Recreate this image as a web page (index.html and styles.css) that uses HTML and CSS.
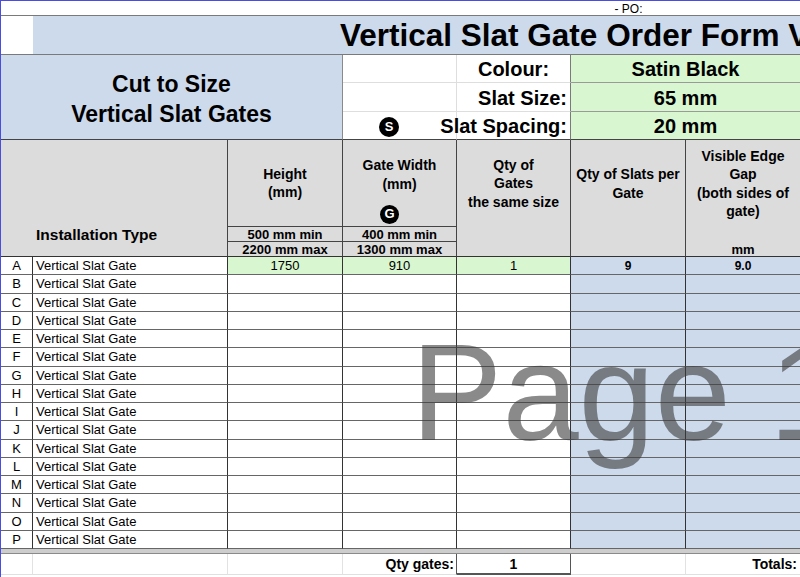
FILE: index.html
```html
<!DOCTYPE html>
<html lang="en">
<head>
<meta charset="utf-8">
<title>Vertical Slat Gate Order Form</title>
<link rel="stylesheet" href="styles.css">
</head>
<body>
<div class="frame">
  <div class="sheet">
    <!-- PO row -->
    <div class="c po-blank"></div>
    <div class="c po">- PO:</div>
    <div class="c po-end"></div>

    <!-- Title row -->
    <div class="c title-gap"></div>
    <div class="c title"><span>Vertical Slat Gate Order Form V2</span></div>

    <!-- Info rows -->
    <div class="c cut"><div>Cut to Size<br>Vertical Slat Gates</div></div>
    <div class="c blank"></div>
    <div class="c label center">Colour:</div>
    <div class="c value">Satin Black</div>
    <div class="c blank"></div>
    <div class="c label">Slat Size:</div>
    <div class="c value">65 mm</div>
    <div class="c blank last s-cell"><span class="badge">S</span></div>
    <div class="c label last">Slat Spacing:</div>
    <div class="c value last">20 mm</div>

    <!-- Header -->
    <div class="c hd inst">Installation Type</div>
    <div class="c hd hmain sep">Height<br>(mm)</div>
    <div class="c hd hmain sep gw"><div>Gate Width<br>(mm)</div><span class="badge badge-g">G</span></div>
    <div class="c hd hmain">Qty of<br>Gates<br>the same size</div>
    <div class="c hd hmain">Qty of Slats per<br>Gate</div>
    <div class="c hd hmain end">Visible Edge<br>Gap<br>(both sides of<br>gate)</div>

    <div class="c hd hsub sep">500 mm min</div>
    <div class="c hd hsub sep">400 mm min</div>
    <div class="c hd hsub"></div>
    <div class="c hd hsub"></div>
    <div class="c hd hsub end"></div>

    <div class="c hd hsub sep bot">2200 mm max</div>
    <div class="c hd hsub sep bot">1300 mm max</div>
    <div class="c hd hsub bot"></div>
    <div class="c hd hsub bot"></div>
    <div class="c hd hsub bot end">mm</div>

    <!-- Data rows -->
    <div class="c d let">A</div><div class="c d typ">Vertical Slat Gate</div><div class="c d num green">1750</div><div class="c d num green">910</div><div class="c d num green">1</div><div class="c d num blue bold">9</div><div class="c d num blue bold end">9.0</div>
    <div class="c d let">B</div><div class="c d typ">Vertical Slat Gate</div><div class="c d"></div><div class="c d"></div><div class="c d"></div><div class="c d blue"></div><div class="c d blue end"></div>
    <div class="c d let">C</div><div class="c d typ">Vertical Slat Gate</div><div class="c d"></div><div class="c d"></div><div class="c d"></div><div class="c d blue"></div><div class="c d blue end"></div>
    <div class="c d let">D</div><div class="c d typ">Vertical Slat Gate</div><div class="c d"></div><div class="c d"></div><div class="c d"></div><div class="c d blue"></div><div class="c d blue end"></div>
    <div class="c d let">E</div><div class="c d typ">Vertical Slat Gate</div><div class="c d"></div><div class="c d"></div><div class="c d"></div><div class="c d blue"></div><div class="c d blue end"></div>
    <div class="c d let">F</div><div class="c d typ">Vertical Slat Gate</div><div class="c d"></div><div class="c d"></div><div class="c d"></div><div class="c d blue"></div><div class="c d blue end"></div>
    <div class="c d let">G</div><div class="c d typ">Vertical Slat Gate</div><div class="c d"></div><div class="c d"></div><div class="c d"></div><div class="c d blue"></div><div class="c d blue end"></div>
    <div class="c d let">H</div><div class="c d typ">Vertical Slat Gate</div><div class="c d"></div><div class="c d"></div><div class="c d"></div><div class="c d blue"></div><div class="c d blue end"></div>
    <div class="c d let">I</div><div class="c d typ">Vertical Slat Gate</div><div class="c d"></div><div class="c d"></div><div class="c d"></div><div class="c d blue"></div><div class="c d blue end"></div>
    <div class="c d let">J</div><div class="c d typ">Vertical Slat Gate</div><div class="c d"></div><div class="c d"></div><div class="c d"></div><div class="c d blue"></div><div class="c d blue end"></div>
    <div class="c d let">K</div><div class="c d typ">Vertical Slat Gate</div><div class="c d"></div><div class="c d"></div><div class="c d"></div><div class="c d blue"></div><div class="c d blue end"></div>
    <div class="c d let">L</div><div class="c d typ">Vertical Slat Gate</div><div class="c d"></div><div class="c d"></div><div class="c d"></div><div class="c d blue"></div><div class="c d blue end"></div>
    <div class="c d let">M</div><div class="c d typ">Vertical Slat Gate</div><div class="c d"></div><div class="c d"></div><div class="c d"></div><div class="c d blue"></div><div class="c d blue end"></div>
    <div class="c d let">N</div><div class="c d typ">Vertical Slat Gate</div><div class="c d"></div><div class="c d"></div><div class="c d"></div><div class="c d blue"></div><div class="c d blue end"></div>
    <div class="c d let">O</div><div class="c d typ">Vertical Slat Gate</div><div class="c d"></div><div class="c d"></div><div class="c d"></div><div class="c d blue"></div><div class="c d blue end"></div>
    <div class="c d let">P</div><div class="c d typ">Vertical Slat Gate</div><div class="c d"></div><div class="c d"></div><div class="c d"></div><div class="c d blue"></div><div class="c d blue end"></div>

    <!-- band -->
    <div class="c band"></div>

    <!-- totals -->
    <div class="c t"></div>
    <div class="c t"></div>
    <div class="c t"></div>
    <div class="c t tlabel">Qty gates:</div>
    <div class="c t tval">1</div>
    <div class="c t"></div>
    <div class="c t tlabel end">Totals:</div>
  </div>
  <div class="watermark">Page 1</div>
</div>
</body>
</html>
```

FILE: styles.css
```css
* { box-sizing: border-box; }
html, body { margin: 0; padding: 0; background: #fff; }
body { font-family: "Liberation Sans", Arial, sans-serif; color: #000; }

.frame {
  position: relative;
  width: 800px;
  height: 577px;
  overflow: hidden;
  border-top: 1px solid #4b4de0;
  border-left: 1px solid #4b4de0;
}

.sheet {
  display: grid;
  grid-template-columns: 32px 195px 115px 114px 114px 115px 114px;
  grid-template-rows: 15px 39px 28px 29px 28px 87px 15px 15px repeat(16, 18.25px) 5px 21px;
}

.c {
  display: flex;
  align-items: center;
  min-width: 0;
  white-space: nowrap;
}

/* PO row */
.po-blank { grid-column: span 5; border-bottom: 1px solid #7a7a7a; }
.po { justify-content: center; font-size: 12px; border-bottom: 1px solid #7a7a7a; padding-top: 1px; }
.po-end { border-bottom: 1px solid #7a7a7a; }

/* Title */
.title-gap { border-bottom: 1px solid #7a7a7a; }
.title {
  grid-column: span 6;
  background: #ccdaec;
  border-bottom: 1px solid #7a7a7a;
  padding-left: 307px;
  padding-top: 1px;
  font-weight: bold;
  font-size: 31.5px;
  overflow: hidden;
}

/* Info */
.cut {
  grid-column: span 3;
  grid-row: span 3;
  background: #ccdaec;
  justify-content: center;
  text-align: center;
  font-weight: bold;
  font-size: 23px;
  line-height: 30px;
  padding-top: 3px;
  border-right: 1px solid #8a8a8a;
  border-bottom: 1px solid #444;
}
.blank { border-bottom: 1px solid #dedede; border-right: 1px solid #dedede; }
.label {
  justify-content: flex-end;
  padding-right: 3px;
  padding-top: 2px;
  font-weight: bold;
  font-size: 20px;
  border-bottom: 1px solid #dedede;
  border-right: 1px solid #7a7a7a;
}
.label.center { justify-content: center; padding-right: 0; }
.value {
  grid-column: span 2;
  background: #d8f6d0;
  justify-content: center;
  padding-top: 2px;
  font-weight: bold;
  font-size: 20px;
  border-bottom: 1px solid #9a9a9a;
}
.last { border-bottom: 1px solid #444; }
.s-cell { padding-left: 36px; padding-top: 2px; }

.badge {
  width: 20px;
  height: 20px;
  border-radius: 50%;
  background: #000;
  color: #fff;
  font-weight: bold;
  font-size: 13px;
  display: flex;
  align-items: center;
  justify-content: center;
  flex: none;
}
.badge-g { width: 19px; height: 19px; margin-top: 12px; margin-right: 20px; }

/* Header */
.hd { background: #dcdcdc; border-right: 1px solid #444; font-weight: bold; }
.hd.end { border-right: none; }
.inst {
  grid-column: span 2;
  grid-row: span 3;
  align-items: flex-end;
  padding-left: 35px;
  padding-bottom: 12px;
  font-size: 15.5px;
  border-bottom: 1px solid #333;
}
.hmain {
  justify-content: center;
  text-align: center;
  font-size: 14px;
  line-height: 18.5px;
}
.hmain.sep { border-bottom: 1px solid #444; }
.hmain.gw { flex-direction: column; justify-content: flex-start; padding-top: 16px; }
.hsub { justify-content: center; font-size: 13px; }
.hsub.sep { border-bottom: 1px solid #444; }
.hsub.bot { border-bottom: 1px solid #333; }

/* Data */
.d {
  font-size: 13px;
  border-right: 1px solid #333;
  border-bottom: 1px solid #666;
}
.d.end { border-right: none; }
.let { justify-content: center; }
.typ { padding-left: 3px; }
.num { justify-content: center; }
.green { background: #d8f6d0; }
.blue { background: #ccdaec; }
.bold { font-weight: bold; font-size: 12px; }

/* Band */
.band {
  grid-column: span 7;
  background: #cdcdcd;
  border-bottom: 1px solid #8a8a8a;
}

/* Totals */
.t {
  border-right: 1px solid #e2e2e2;
  border-bottom: 1px solid #e0e0e0;
  font-weight: bold;
  font-size: 14px;
}
.tlabel { justify-content: flex-end; padding-right: 2px; border-right: 1px solid #555; }
.tlabel.end { border-right: none; padding-right: 3px; }
.tval { justify-content: center; border-right: 1px solid #555; border-bottom: 2px solid #555; }

/* Watermark */
.watermark {
  position: absolute;
  left: 410px;
  top: 323px;
  font-size: 137px;
  line-height: 1;
  color: rgba(60, 60, 60, 0.6);
  white-space: nowrap;
  pointer-events: none;
}
```
